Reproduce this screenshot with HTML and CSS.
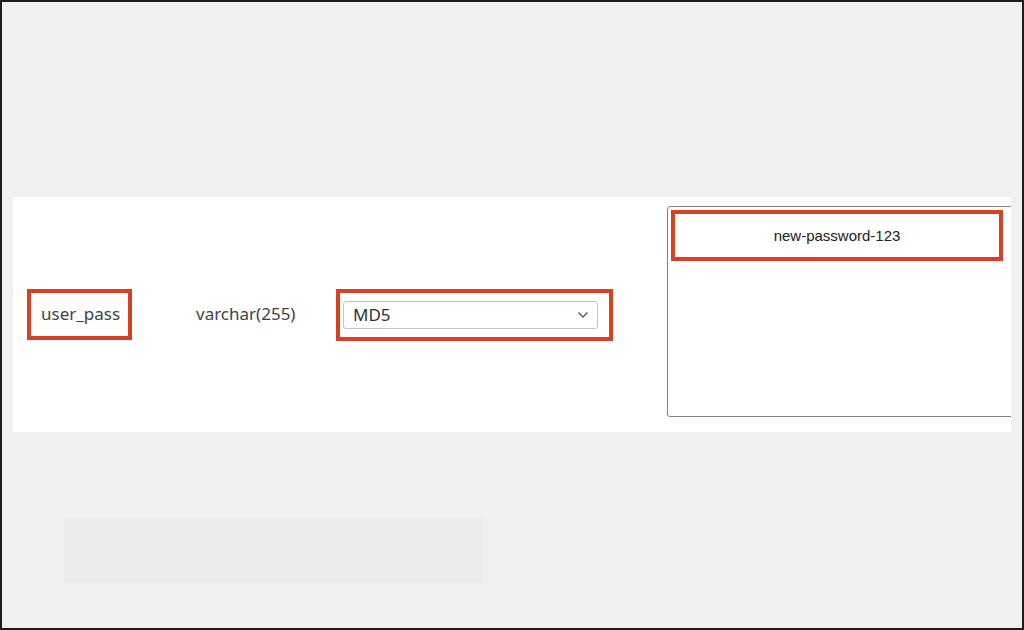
FILE: index.html
```html
<!DOCTYPE html>
<html>
<head>
<meta charset="utf-8">
<link rel="stylesheet" href="styles.css">
</head>
<body>
<div class="frame">
  <div class="panel">
    <div class="cell-name hl">user_pass</div>
    <div class="cell-type">varchar(255)</div>
    <div class="cell-func hl">
      <div class="select">
        <span class="select-value">MD5</span>
        <svg class="chev" width="12" height="8" viewBox="0 0 12 8"><path d="M1.5 1.5 L6 6 L10.5 1.5" fill="none" stroke="#50575e" stroke-width="1.4"/></svg>
      </div>
    </div>
    <div class="cell-value">
      <div class="value-box hl">new-password-123</div>
    </div>
  </div>
  <div class="ghost"></div>
</div>
</body>
</html>
```
FILE: styles.css
```css
html, body {
  margin: 0;
  padding: 0;
}
body {
  font-family: "Noto Sans", "Liberation Sans", sans-serif;
  color: #3c434a;
}
.frame {
  width: 1024px;
  height: 630px;
  box-sizing: border-box;
  border: 2px solid #1d1d1d;
  background: #f0f0f2;
  padding: 195px 0 0 11px;
  overflow: hidden;
}
.panel {
  width: 998px;
  height: 235px;
  background: #ffffff;
  display: flex;
  align-items: center;
  padding-left: 14px;
  box-sizing: border-box;
  overflow: hidden;
}
.panel > * {
  flex-shrink: 0;
}
.hl {
  border: 4px solid #d74120;
  box-sizing: border-box;
}
.cell-name {
  width: 105px;
  height: 51px;
  display: flex;
  align-items: center;
  padding-left: 10px;
  padding-bottom: 2px;
  font-size: 17px;
}
.cell-type {
  margin-left: 64px;
  font-size: 17px;
  width: 140px;
  padding-bottom: 2px;
}
.cell-func {
  width: 277px;
  height: 52px;
  padding: 8px 11px 0 3px;
}
.select {
  height: 28px;
  border: 1px solid #c3c4c7;
  border-radius: 3px;
  box-sizing: border-box;
  display: flex;
  align-items: center;
  justify-content: space-between;
  padding: 0 8px 0 9px;
  background: #fff;
}
.select-value {
  font-size: 17px;
  color: #2c3338;
}
.chev {
  display: block;
}
.cell-value {
  align-self: flex-start;
  margin-top: 9px;
  margin-left: 54px;
  width: 360px;
  height: 211px;
  border: 1px solid #7e8388;
  border-radius: 3px;
  box-sizing: border-box;
  padding: 3px;
}
.value-box {
  width: 332px;
  height: 51px;
  display: flex;
  align-items: center;
  justify-content: center;
  font-family: "Liberation Sans", Arial, sans-serif;
  font-size: 15px;
  color: #222;
  padding-bottom: 1px;
}
.ghost {
  margin: 85px 0 0 51px;
  width: 419px;
  height: 66px;
  background: #ececed;
}
```
